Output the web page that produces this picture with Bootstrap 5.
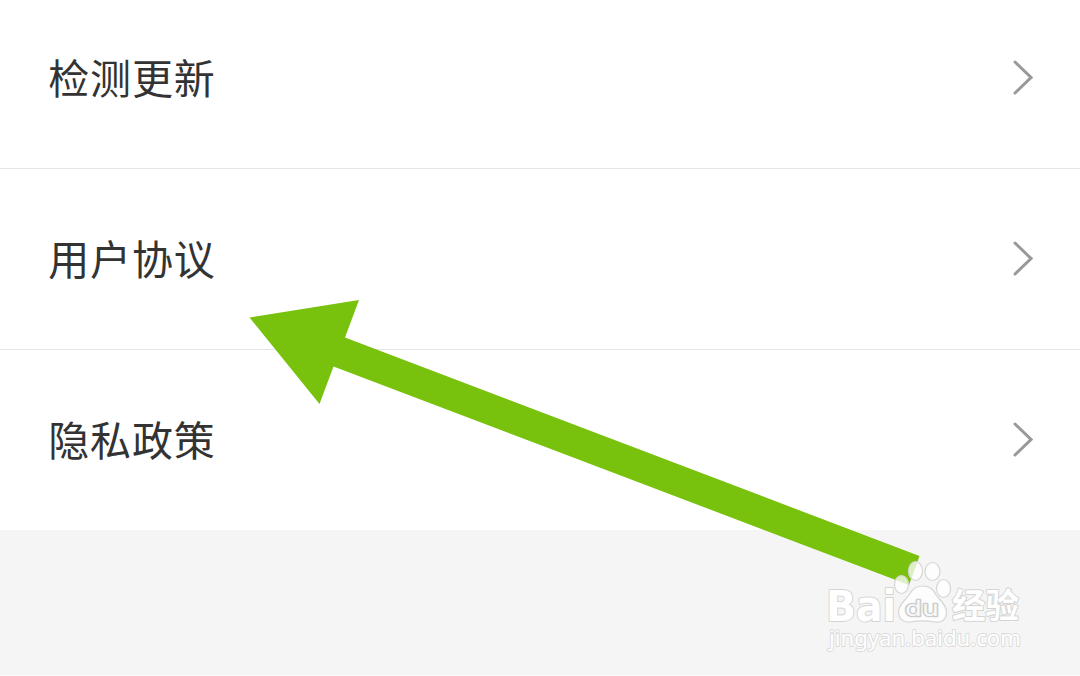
<!DOCTYPE html>
<html lang="zh-CN">
<head>
  <meta charset="UTF-8">
  <meta name="viewport" content="width=device-width, initial-scale=1.0">
  <title>设置</title>

  <!-- Bootstrap CSS -->
  <link href="https://cdn.jsdelivr.net/npm/bootstrap@5.3.3/dist/css/bootstrap.min.css" rel="stylesheet">
  <style>
    body {
      font-family: "Noto Sans CJK SC", sans-serif;
      background-color: #f5f5f5;
      color: #333;
      height: 676px;
    }

    .setting-row {
      height: 181px;
      padding: 0 47.5px 1px 48.3px;
      border: 0;
      border-bottom: 1px solid #e5e5e5;
      color: #333;
      font-size: 41px;
      letter-spacing: .8px;
      line-height: 60px;
    }

    .setting-row:first-child {
      height: 169px;
      padding-bottom: 13px;
    }

    .setting-row:last-child {
      height: 180px;
      border-bottom: 0;
    }

    .setting-name {
      padding-bottom: 4px;
    }

    .chevron {
      width: 20px;
      height: 36px;
      fill: none;
      stroke: #999;
      stroke-width: 3;
      stroke-linecap: round;
    }

    .bottom-line {
      height: 1px;
      background-color: #fcfcfc;
    }

    .logo-text {
      font-family: "DejaVu Sans", sans-serif;
    }

    .site {
      font-family: "Noto Sans", sans-serif;
    }
  </style>
</head>

<body class="position-relative overflow-hidden d-flex flex-column">
  <div class="list-group list-group-flush">
    <a href="#" class="list-group-item setting-row d-flex align-items-center justify-content-between">
      <span class="setting-name">检测更新</span>
      <svg class="chevron" viewBox="0 0 20 36"><path d="M2 2 18 17.500 2 33"/></svg>
    </a>
    <a href="#" class="list-group-item setting-row d-flex align-items-center justify-content-between">
      <span class="setting-name">用户协议</span>
      <svg class="chevron" viewBox="0 0 20 36"><path d="M2 2 18 17.500 2 33"/></svg>
    </a>
    <a href="#" class="list-group-item setting-row d-flex align-items-center justify-content-between">
      <span class="setting-name">隐私政策</span>
      <svg class="chevron" viewBox="0 0 20 36"><path d="M2 2 18 17.500 2 33"/></svg>
    </a>
  </div>
  <div class="bottom-line mt-auto"></div>

  <!-- Arrow and watermark over the list -->
  <svg class="position-absolute top-0 start-0 pe-none" width="1080" height="676" viewBox="0 0 1080 676">
    <path fill="#78c10c" d="M249.500 317.500 359 300 345 337.500 919.500 556 909 585 333.500 366.500 319.500 404Z"/>

    <g fill="#fff" fill-opacity=".75" stroke="#d6d6d6" stroke-width="1.200" stroke-linejoin="round">
      <ellipse cx="901.500" cy="584.500" rx="7" ry="9"/>
      <ellipse cx="915.500" cy="571" rx="7" ry="9.500"/>
      <ellipse cx="932.500" cy="571.500" rx="7.500" ry="9"/>
      <ellipse cx="943.500" cy="588.500" rx="7" ry="9"/>
      <path d="M922.500 586C930 586 934 590 936 595C939 600 947 604 946.500 613C946 620 941 623 935 622C927 620.500 918 620.500 910 622C903 623 898.500 618 898.500 612C898.500 604 906 600 909 595C912 590 915 586 922.500 586Z"/>
    </g>
    <g fill="#fff" stroke="#d4d4d4" stroke-linejoin="round" paint-order="stroke">
      <text class="logo-text fw-bold" x="826" y="620.500" font-size="43" stroke-width="2" textLength="70" lengthAdjust="spacingAndGlyphs">Bai</text>
      <text class="logo-text" x="905" y="615.500" font-size="21" fill="#f8f8f8" stroke="#ccc" stroke-width="2.600" textLength="34" lengthAdjust="spacingAndGlyphs">du</text>
      <text x="952" y="618" font-size="34" font-weight="700" stroke-width="2" textLength="67" lengthAdjust="spacingAndGlyphs">经验</text>
      <text class="site" x="829" y="646" font-size="22" stroke="#dadada" stroke-width="1.800" textLength="192" lengthAdjust="spacingAndGlyphs">jingyan.baidu.com</text>
    </g>
  </svg>

  <!-- Bootstrap JS -->
  <script src="https://cdn.jsdelivr.net/npm/bootstrap@5.3.3/dist/js/bootstrap.bundle.min.js"></script>
</body>
</html>
